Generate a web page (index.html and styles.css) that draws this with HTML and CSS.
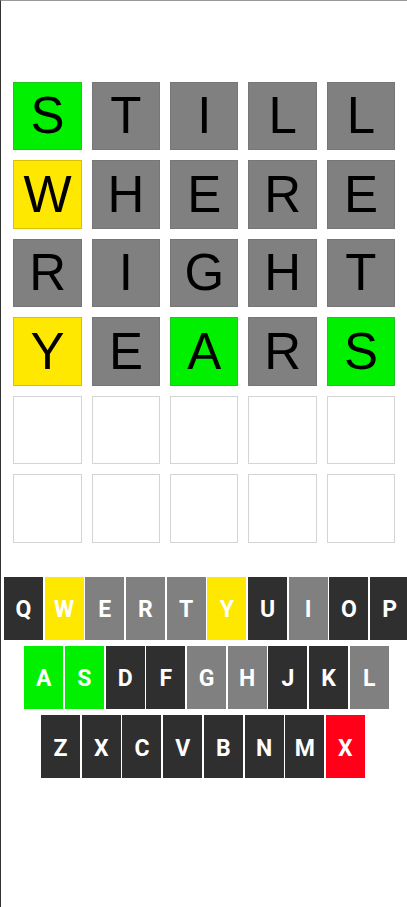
FILE: index.html
```html
<!DOCTYPE html>
<html>
<head>
    <title>Wordle</title>
    <link rel="stylesheet" href="styles.css">
</head>
<body>
    <div class="frame">
        <div class="board">
            <div class="tile correct">S</div>
            <div class="tile absent">T</div>
            <div class="tile absent">I</div>
            <div class="tile absent">L</div>
            <div class="tile absent">L</div>

            <div class="tile present">W</div>
            <div class="tile absent">H</div>
            <div class="tile absent">E</div>
            <div class="tile absent">R</div>
            <div class="tile absent">E</div>

            <div class="tile absent">R</div>
            <div class="tile absent">I</div>
            <div class="tile absent">G</div>
            <div class="tile absent">H</div>
            <div class="tile absent">T</div>

            <div class="tile present">Y</div>
            <div class="tile absent">E</div>
            <div class="tile correct">A</div>
            <div class="tile absent">R</div>
            <div class="tile correct">S</div>

            <div class="tile"></div>
            <div class="tile"></div>
            <div class="tile"></div>
            <div class="tile"></div>
            <div class="tile"></div>

            <div class="tile"></div>
            <div class="tile"></div>
            <div class="tile"></div>
            <div class="tile"></div>
            <div class="tile"></div>
        </div>

        <div class="keyboard">
            <div class="key-row">
                <button class="key used">Q</button>
                <button class="key present">W</button>
                <button class="key absent">E</button>
                <button class="key absent">R</button>
                <button class="key absent">T</button>
                <button class="key present">Y</button>
                <button class="key used">U</button>
                <button class="key absent">I</button>
                <button class="key used">O</button>
                <button class="key used">P</button>
            </div>
            <div class="key-row">
                <button class="key correct">A</button>
                <button class="key correct">S</button>
                <button class="key used">D</button>
                <button class="key used">F</button>
                <button class="key absent">G</button>
                <button class="key absent">H</button>
                <button class="key used">J</button>
                <button class="key used">K</button>
                <button class="key absent">L</button>
            </div>
            <div class="key-row last">
                <button class="key used">Z</button>
                <button class="key used">X</button>
                <button class="key used">C</button>
                <button class="key used">V</button>
                <button class="key used">B</button>
                <button class="key used">N</button>
                <button class="key used">M</button>
                <button class="key delete">X</button>
            </div>
        </div>
    </div>
</body>
</html>
```

FILE: styles.css
```css
html, body {
    margin: 0;
    padding: 0;
    background: #fff;
}

.frame {
    box-sizing: border-box;
    width: 407px;
    height: 907px;
    border-left: 1px solid #333;
    border-top: 1px solid #999;
    overflow: hidden;
}

.board {
    display: grid;
    grid-template-columns: repeat(5, 68.5px);
    grid-auto-rows: 68.5px;
    column-gap: 9.85px;
    row-gap: 10px;
    padding-top: 80.7px;
    margin-left: 12.3px;
}

.tile {
    box-sizing: border-box;
    display: flex;
    justify-content: center;
    align-items: center;
    border: 1px solid #d4d4d4;
    font-family: "Liberation Sans", Arial, sans-serif;
    font-size: 51px;
    color: #000;
}

.tile.correct {
    background-color: #00f000;
    border-color: #1cc81c;
}

.tile.present {
    background-color: #ffe800;
    border-color: #d8c200;
}

.tile.absent {
    background-color: #808080;
    border-color: #767676;
}

.keyboard {
    margin-top: 34px;
    padding-left: 5px;
    display: flex;
    flex-direction: column;
    gap: 6.3px;
}

.key-row {
    display: flex;
    justify-content: center;
    gap: 1.7px;
}

.key-row.last {
    padding-right: 7px;
}

.key {
    flex: none;
    width: 39px;
    height: 63px;
    padding: 3px 0 0;
    border: none;
    font-family: Roboto, "Noto Sans", sans-serif;
    font-weight: bold;
    font-size: 23px;
    color: #fff;
    cursor: pointer;
}

.key.used {
    background-color: #2f2f2f;
}

.key.absent {
    background-color: #808080;
}

.key.present {
    background-color: #ffe800;
}

.key.correct {
    background-color: #00f000;
}

.key.delete {
    background-color: #ff0018;
}
```
